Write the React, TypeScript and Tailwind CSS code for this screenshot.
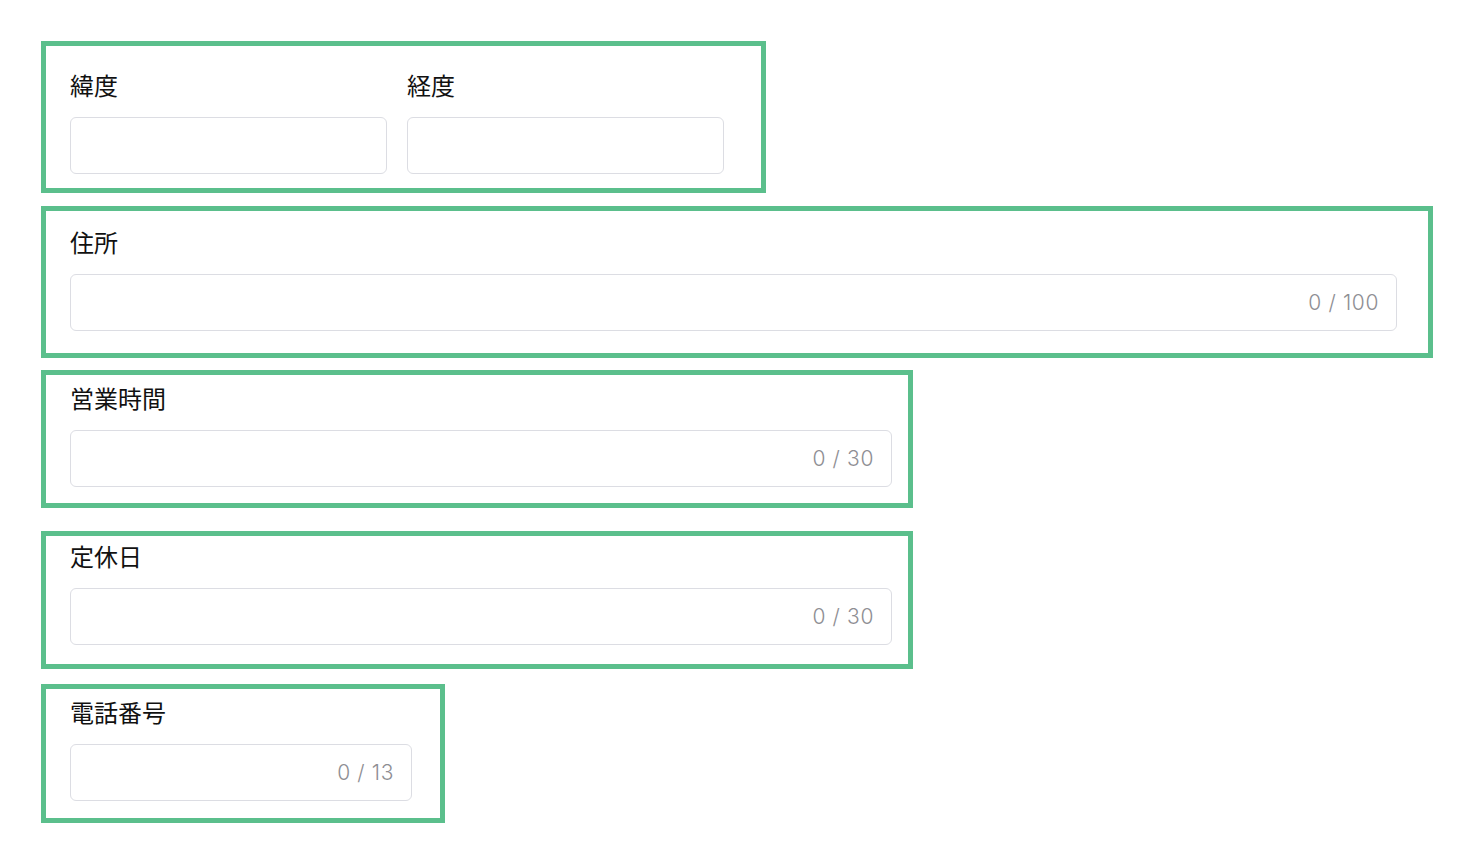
const font = { fontFamily: '"Noto Sans CJK JP", "Noto Sans", sans-serif' };

function Field({
  label,
  width,
  max,
}: {
  label: string;
  width: string;
  max?: number;
}) {
  return (
    <div className={`flex flex-col ${width}`}>
      <label className="block h-[24px] text-[24px] leading-[24px] text-[#111111] mb-[20px]">{label}</label>
      <div className="relative h-[57px] w-full rounded-[6px] border border-[#dcdde3] bg-white">
        {max !== undefined ? (
          <span className="absolute right-[17px] top-1/2 -translate-y-1/2 font-['Inter',sans-serif] text-[21px] font-light text-[#8e8e93] tracking-[0.03em]">
            0 / {max}
          </span>
        ) : null}
      </div>
    </div>
  );
}

export default function App() {
  return (
    <div className="min-h-screen bg-white pl-[41px] pt-[41px]" style={font}>
      <div className="flex flex-col items-start">
        {/* 緯度・経度 */}
        <section className="w-[725px] border-[5px] border-[#5bbf8c] pl-[24px] pt-[27px] pb-[14px]">
          <div className="flex gap-[20px]">
            <Field label="緯度" width="w-[317px]" />
            <Field label="経度" width="w-[317px]" />
          </div>
        </section>

        {/* 住所 */}
        <section className="mt-[13px] w-[1392px] border-[5px] border-[#5bbf8c] pl-[24px] pt-[19px] pb-[22px]">
          <Field label="住所" width="w-[1327px]" max={100} />
        </section>

        {/* 営業時間 */}
        <section className="mt-[12px] w-[872px] border-[5px] border-[#5bbf8c] pl-[24px] pt-[11px] pb-[16px]">
          <Field label="営業時間" width="w-[822px]" max={30} />
        </section>

        {/* 定休日 */}
        <section className="mt-[23px] w-[872px] border-[5px] border-[#5bbf8c] pl-[24px] pt-[8px] pb-[19px]">
          <Field label="定休日" width="w-[822px]" max={30} />
        </section>

        {/* 電話番号 */}
        <section className="mt-[15px] w-[404px] border-[5px] border-[#5bbf8c] pl-[24px] pt-[11px] pb-[17px]">
          <Field label="電話番号" width="w-[342px]" max={13} />
        </section>
      </div>
    </div>
  );
}
